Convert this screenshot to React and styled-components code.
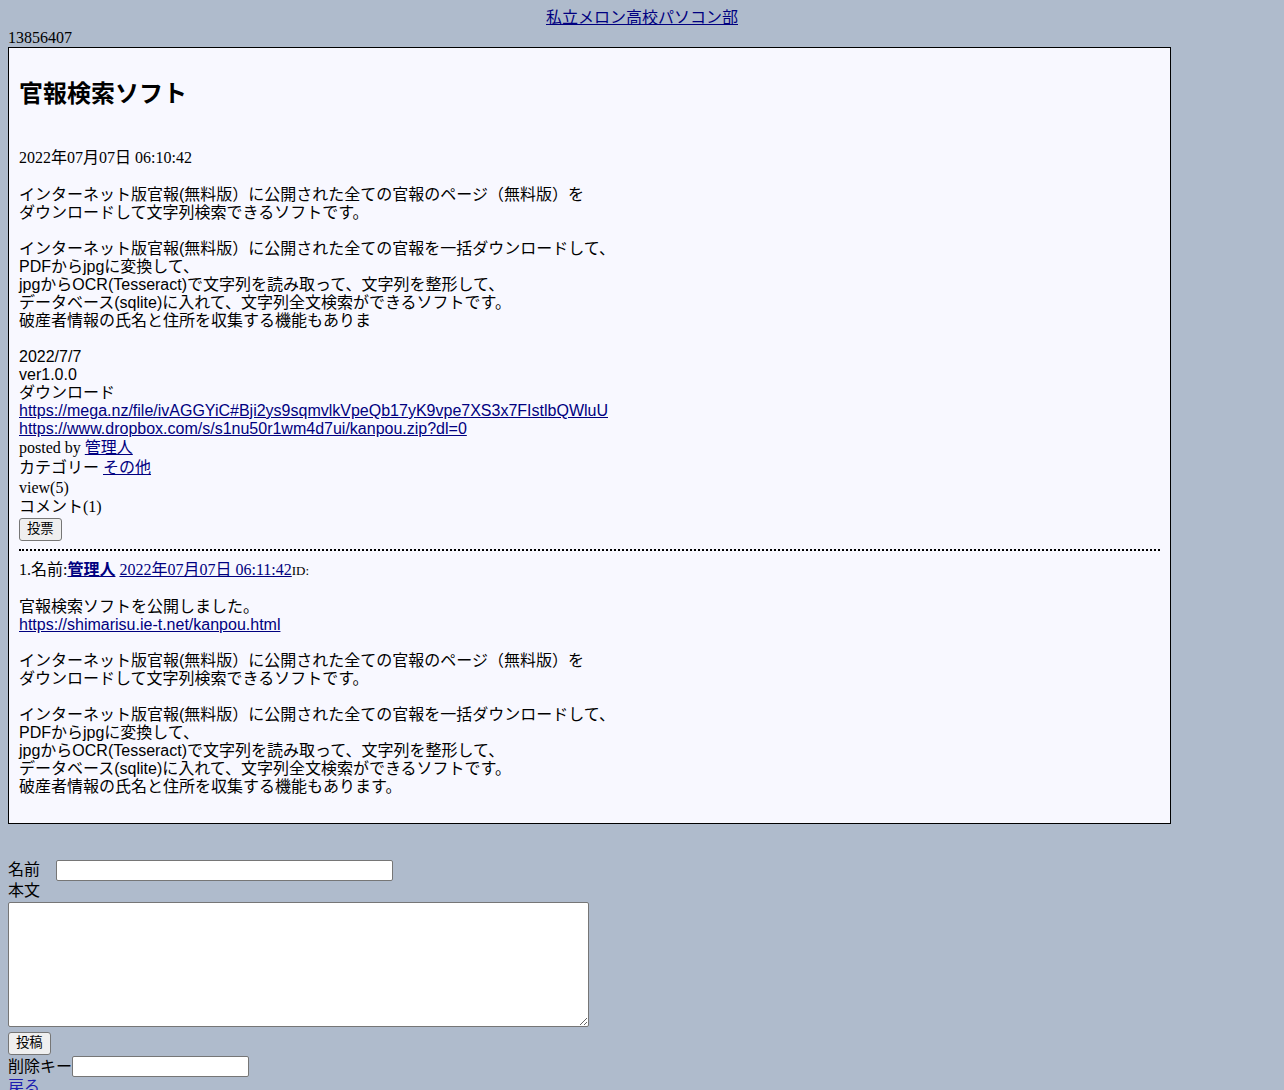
import React from "react";
import styled, { createGlobalStyle } from "styled-components";

const SERIF = `"Liberation Serif", "Noto Sans CJK JP", serif`;
const SANS = `"Liberation Sans", "Noto Sans CJK JP", sans-serif`;

const Global = createGlobalStyle`
  html, body { margin: 0; padding: 0; }
  body {
    margin: 8px;
    background: #afbbcc;
    color: #000;
    font-family: ${SERIF};
    font-size: 16px;
  }
`;

const Link = styled.a`
  color: ${(p) => p.$color || "#000080"};
  text-decoration: underline;
  font-weight: ${(p) => (p.$bold ? "bold" : "normal")};
`;

const Header = styled.div`
  text-align: center;
  line-height: 20px;
`;

const Counter = styled.div`
  line-height: 19px;
`;

const Article = styled.div`
  width: 90%;
  background: #f8f8ff;
  border: 1px solid #000;
  padding: 10px 10px 9px;
`;

const Title = styled.h2`
  margin: 22px 0 41px;
  font-family: ${SANS};
  font-size: 24px;
  font-weight: bold;
  line-height: 28px;
`;

const DateLine = styled.div`
  line-height: 18px;
  margin-bottom: 18px;
`;

const Body = styled.div`
  font-family: ${SANS};
  font-size: 16px;
  line-height: 18px;
  white-space: nowrap;
  padding-top: ${(p) => p.$pt || 0}px;
`;

const Meta = styled.div`
  line-height: ${(p) => p.$lh}px;
`;

const Button = styled.button`
  display: block;
  font-family: ${SANS};
  font-size: 13.33px;
  height: 23px;
  padding: 0 7px 1px;
  margin: ${(p) => p.$margin || "0"};
  background: #efefef;
  color: #000;
  border: 1px solid #767676;
  border-radius: 3px;
  line-height: 18px;
`;

const Divider = styled.div`
  margin: 8px 0 10px;
  border-top: 2px dotted #000;
`;

const CommentHead = styled.div`
  line-height: 18px;
`;

const Small = styled.span`
  font-size: 13px;
`;

const Form = styled.form`
  margin-top: 36px;
  font-family: ${SANS};
  font-size: 16px;
`;

const Row = styled.div`
  display: flex;
  align-items: center;
  height: 21px;
`;

const Label = styled.span`
  line-height: 20px;
  margin-right: ${(p) => p.$gap || 0}px;
  margin-top: ${(p) => p.$lift || 0}px;
`;

const TextInput = styled.input`
  box-sizing: border-box;
  width: ${(p) => p.$w}px;
  height: 21px;
  border: 1px solid #767676;
  border-radius: 2px;
  background: #fff;
  padding: 1px 2px;
  margin: 0;
`;

const TextArea = styled.textarea`
  display: block;
  box-sizing: border-box;
  width: 581px;
  height: 125px;
  margin: 1px 0 0;
  border: 1px solid #767676;
  border-radius: 2px;
  background: #fff;
`;

const Back = styled.div`
  line-height: 20px;
`;

export default function App() {
  return (
    <>
      <Global />
      <Header>
        <Link href="#">私立メロン高校パソコン部</Link>
      </Header>
      <Counter>13856407</Counter>
      <Article>
        <Title>官報検索ソフト</Title>
        <DateLine>2022年07月07日 06:10:42</DateLine>
        <Body $pt={1}>
          インターネット版官報(無料版）に公開された全ての官報のページ（無料版）を<br />
          ダウンロードして文字列検索できるソフトです。<br />
          <br />
          インターネット版官報(無料版）に公開された全ての官報を一括ダウンロードして、<br />
          PDFからjpgに変換して、<br />
          jpgからOCR(Tesseract)で文字列を読み取って、文字列を整形して、<br />
          データベース(sqlite)に入れて、文字列全文検索ができるソフトです。<br />
          破産者情報の氏名と住所を収集する機能もありま<br />
          <br />
          2022/7/7<br />
          ver1.0.0<br />
          ダウンロード<br />
          <Link href="#">https://mega.nz/file/ivAGGYiC#Bji2ys9sqmvlkVpeQb17yK9vpe7XS3x7FIstlbQWluU</Link>
          <br />
          <Link href="#">https://www.dropbox.com/s/s1nu50r1wm4d7ui/kanpou.zip?dl=0</Link>
        </Body>
        <Meta $lh={19}>
          posted by <Link href="#">管理人</Link>
        </Meta>
        <Meta $lh={21}>
          カテゴリー <Link href="#">その他</Link>
        </Meta>
        <Meta $lh={20}>view(5)</Meta>
        <Meta $lh={18}>コメント(1)</Meta>
        <Button type="button" $margin="2px 0 0">投票</Button>
        <Divider />
        <CommentHead>
          1.名前:<Link href="#" $bold>管理人</Link>{" "}
          <Link href="#">2022年07月07日 06:11:42</Link>
          <Small>ID:</Small>
        </CommentHead>
        <Body>
          <br />
          官報検索ソフトを公開しました。<br />
          <Link href="#">https://shimarisu.ie-t.net/kanpou.html</Link>
          <br />
          <br />
          インターネット版官報(無料版）に公開された全ての官報のページ（無料版）を<br />
          ダウンロードして文字列検索できるソフトです。<br />
          <br />
          インターネット版官報(無料版）に公開された全ての官報を一括ダウンロードして、<br />
          PDFからjpgに変換して、<br />
          jpgからOCR(Tesseract)で文字列を読み取って、文字列を整形して、<br />
          データベース(sqlite)に入れて、文字列全文検索ができるソフトです。<br />
          破産者情報の氏名と住所を収集する機能もあります。<br />
          <br />
        </Body>
      </Article>
      <Form onSubmit={(e) => e.preventDefault()}>
        <Row>
          <Label $gap={16} $lift={-2}>名前</Label>
          <TextInput type="text" $w={337} />
        </Row>
        <Label as="div">本文</Label>
        <TextArea />
        <Button type="submit" $margin="5px 0 1px">投稿</Button>
        <Row>
          <Label>削除キー</Label>
          <TextInput type="password" $w={177} />
        </Row>
        <Back>
          <Link href="#" $color="#1c1cb0">戻る</Link>
        </Back>
      </Form>
    </>
  );
}
